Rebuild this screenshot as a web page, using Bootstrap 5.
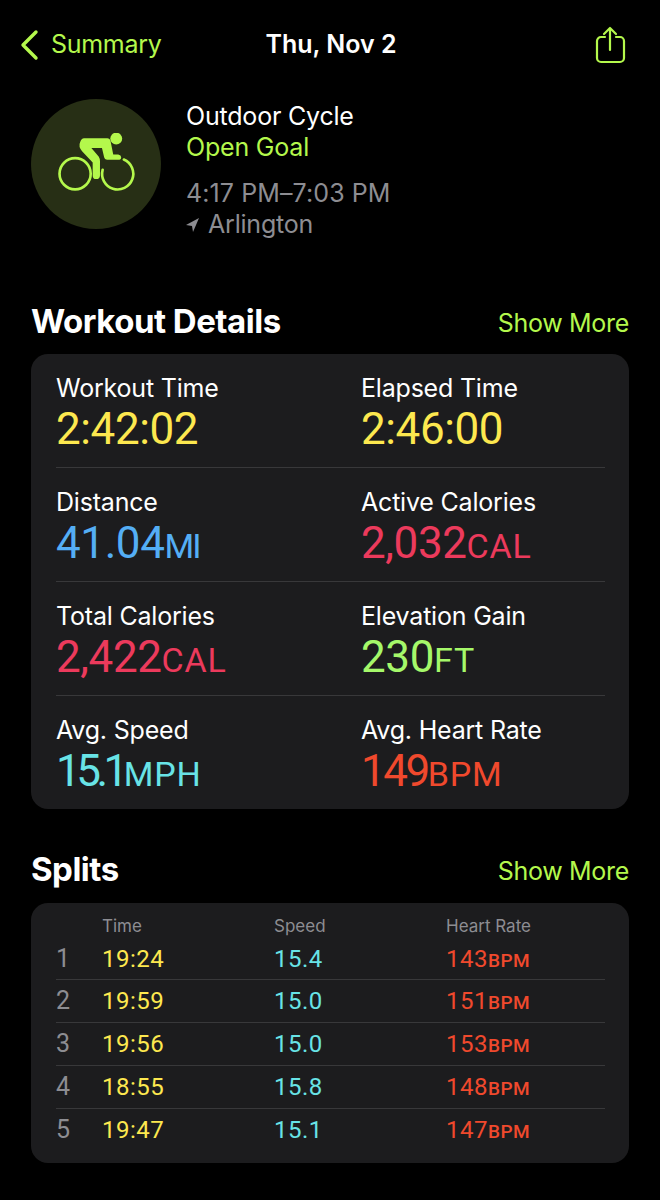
<!DOCTYPE html>
<html>
<head>
    <link href="https://cdn.jsdelivr.net/npm/bootstrap@5.3.0/dist/css/bootstrap.min.css" rel="stylesheet">
    <style>
        body {
            background: #000;
            color: #fff;
            font-family: Inter, "Liberation Sans", sans-serif;
            width: 660px;
            height: 1200px;
            overflow: hidden;
        }
        .accent { color: #b4f84c; }
        .muted-gray { color: #8d8d92; }
        .top-bar { height: 88px; padding: 2px 33px 0 20px; }
        .top-bar .side-left { width: 215px; gap: 11px; }
        .top-bar .side-right { width: 200px; }
        .back-text { font-size: 25px; letter-spacing: -0.3px; }
        .top-title { font-size: 25px; font-weight: 600; letter-spacing: 0; }
        .workout-head { padding: 11px 0 0 31px; gap: 25px; height: 141px; }
        .ring {
            width: 130px;
            height: 130px;
            border-radius: 50%;
            background: #272f15;
        }
        .head-lines { font-size: 25px; line-height: 31px; letter-spacing: -0.2px; padding-top: 2px; }
        .head-gap { margin-top: 15px; letter-spacing: 0.1px; }
        .place-line { gap: 9px; }
        .sec-head { padding: 0 31px; height: 40px; }
        .head-sec1 { margin-top: 72px; margin-bottom: 13px; }
        .head-sec2 { margin-top: 40px; margin-bottom: 14px; }
        .sec-title { font-size: 33px; font-weight: 700; letter-spacing: -0.5px; line-height: 40px; margin: 0; }
        .sec-link { font-size: 25px; letter-spacing: -0.3px; padding-top: 5px; }
        .panel-box {
            background: #1c1c1e;
            border-radius: 17px;
            margin: 0 31px;
        }
        .detail-grid { padding: 19px 24px 0 25px; height: 455px; }
        .detail-row { height: 114px; }
        .detail-row + .detail-row { border-top: 1px solid #38383a; padding-top: 19px; }
        .detail-row:first-child { height: 94px; }
        .detail-cell { width: 305px; flex: none; }
        .detail-label { font-size: 25px; line-height: 30px; letter-spacing: -0.2px; }
        .detail-val { font-family: Roboto, sans-serif; font-weight: 400; font-size: 44px; line-height: 52px; letter-spacing: -0.4px; }
        .detail-unit { font-size: 34px; font-weight: 400; letter-spacing: 0.8px; }
        .tight-unit { letter-spacing: -2px; }
        .narrow-one { letter-spacing: -4.5px; }
        .narrow-lite { letter-spacing: -2.5px; }
        .v-yellow { color: #fde84f; }
        .v-blue { color: #54aef5; }
        .v-pink { color: #ec3a5c; }
        .v-green { color: #a5f86a; }
        .v-cyan { color: #68e3e6; }
        .v-orange { color: #f0492d; }
        .splits-box { padding: 11px 24px 0 25px; height: 260px; }
        .split-cols { font-size: 17px; line-height: 24px; }
        .split-row { height: 43px; font-family: Roboto, sans-serif; font-size: 24px; letter-spacing: 0.5px; }
        .split-row:nth-child(2) { height: 41px; }
        .split-row + .split-row { border-top: 1px solid #38383a; }
        .col-num { width: 46px; flex: none; font-size: 25px; }
        .col-time { width: 172px; flex: none; }
        .col-speed { width: 172px; flex: none; }
        .split-unit { font-size: 19px; font-weight: 500; letter-spacing: 0.5px; }
    </style>
</head>
<body>
    <div class="top-bar d-flex align-items-center justify-content-between">
        <div class="side-left d-flex align-items-center accent flex-shrink-0">
            <svg width="20" height="32" viewBox="0 0 20 32" fill="none" stroke="#b4f84c" stroke-width="3.4" stroke-linecap="round" stroke-linejoin="round"><path d="M16 3 3 16l13 13"/></svg>
            <span class="back-text">Summary</span>
        </div>
        <div class="top-title">Thu, Nov 2</div>
        <div class="side-right d-flex justify-content-end">
            <svg width="32" height="38" viewBox="0 -1 32 38" fill="none" stroke="#b4f84c" stroke-width="2.2" stroke-linecap="round" stroke-linejoin="round"><path d="M10 10H6a4 4 0 0 0-4 4v17a4 4 0 0 0 4 4h19a4 4 0 0 0 4-4V14a4 4 0 0 0-4-4h-4"/><path d="M15 23V1M9 7l6-6 6 6"/></svg>
        </div>
    </div>

    <div class="workout-head d-flex">
        <div class="ring d-flex align-items-center justify-content-center flex-shrink-0">
            <svg width="80" height="63" viewBox="108 127 240 190" fill="none">
                <circle cx="165" cy="250" r="47" stroke="#b4f84c" stroke-width="8"/>
                <path d="M312 207A47 47 0 1 1 248 238" stroke="#b4f84c" stroke-width="8" stroke-linecap="round"/>
                <circle cx="289" cy="144" r="18" fill="#b4f84c"/>
                <path d="M192 143H262Q270 143 272 152L280 192H295Q304 194 304 200Q304 208 295 208H262Q254 208 252 198L246 172H214L236 198Q240 204 240 212V255Q240 266 228 266Q218 266 218 255V216L186 182Q174 168 180 155Q184 143 192 143Z" fill="#b4f84c"/>
            </svg>
        </div>
        <div class="head-lines">
            <div>Outdoor Cycle</div>
            <div class="accent">Open Goal</div>
            <div class="muted-gray head-gap">4:17 PM–7:03 PM</div>
            <div class="muted-gray d-flex align-items-center place-line">
                <svg width="13" height="14" viewBox="0 0 13 14"><path d="M13 0 0 7l6 1 1 6z" fill="#8d8d92"/></svg>
                <span>Arlington</span>
            </div>
        </div>
    </div>

    <div class="sec-head d-flex justify-content-between align-items-center head-sec1">
        <h2 class="sec-title">Workout Details</h2>
        <span class="sec-link accent">Show More</span>
    </div>
    <div class="panel-box detail-grid">
        <div class="detail-row d-flex">
            <div class="detail-cell"><div class="detail-label">Workout Time</div><div class="detail-val v-yellow">2:42:02</div></div>
            <div><div class="detail-label">Elapsed Time</div><div class="detail-val v-yellow">2:46:00</div></div>
        </div>
        <div class="detail-row d-flex">
            <div class="detail-cell"><div class="detail-label">Distance</div><div class="detail-val v-blue">41.04<span class="detail-unit tight-unit">MI</span></div></div>
            <div><div class="detail-label">Active Calories</div><div class="detail-val v-pink">2,032<span class="detail-unit">CAL</span></div></div>
        </div>
        <div class="detail-row d-flex">
            <div class="detail-cell"><div class="detail-label">Total Calories</div><div class="detail-val v-pink">2,422<span class="detail-unit">CAL</span></div></div>
            <div><div class="detail-label">Elevation Gain</div><div class="detail-val v-green">230<span class="detail-unit">FT</span></div></div>
        </div>
        <div class="detail-row d-flex">
            <div class="detail-cell"><div class="detail-label">Avg. Speed</div><div class="detail-val v-cyan"><span class="narrow-one">15.1</span><span class="detail-unit">MPH</span></div></div>
            <div><div class="detail-label">Avg. Heart Rate</div><div class="detail-val v-orange"><span class="narrow-lite">149</span><span class="detail-unit">BPM</span></div></div>
        </div>
    </div>

    <div class="sec-head d-flex justify-content-between align-items-center head-sec2">
        <h2 class="sec-title">Splits</h2>
        <span class="sec-link accent">Show More</span>
    </div>
    <div class="panel-box splits-box">
        <div class="split-cols d-flex muted-gray">
            <div class="col-num"></div>
            <div class="col-time">Time</div>
            <div class="col-speed">Speed</div>
            <div>Heart Rate</div>
        </div>
        <div class="split-row d-flex align-items-center"><div class="col-num muted-gray">1</div><div class="col-time v-yellow">19:24</div><div class="col-speed v-cyan">15.4</div><div class="v-orange">143<span class="split-unit">BPM</span></div></div>
        <div class="split-row d-flex align-items-center"><div class="col-num muted-gray">2</div><div class="col-time v-yellow">19:59</div><div class="col-speed v-cyan">15.0</div><div class="v-orange">151<span class="split-unit">BPM</span></div></div>
        <div class="split-row d-flex align-items-center"><div class="col-num muted-gray">3</div><div class="col-time v-yellow">19:56</div><div class="col-speed v-cyan">15.0</div><div class="v-orange">153<span class="split-unit">BPM</span></div></div>
        <div class="split-row d-flex align-items-center"><div class="col-num muted-gray">4</div><div class="col-time v-yellow">18:55</div><div class="col-speed v-cyan">15.8</div><div class="v-orange">148<span class="split-unit">BPM</span></div></div>
        <div class="split-row d-flex align-items-center"><div class="col-num muted-gray">5</div><div class="col-time v-yellow">19:47</div><div class="col-speed v-cyan">15.1</div><div class="v-orange">147<span class="split-unit">BPM</span></div></div>
    </div>

    <script src="https://cdn.jsdelivr.net/npm/bootstrap@5.3.0/dist/js/bootstrap.bundle.min.js"></script>
</body>
</html>
